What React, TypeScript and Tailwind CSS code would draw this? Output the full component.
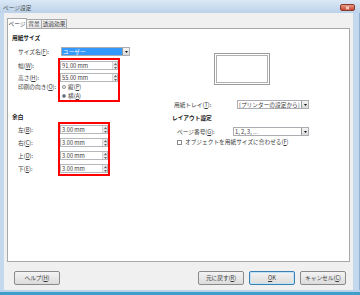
import React from "react";

const U = ({ c }: { c: string }) => <span className="underline decoration-[0.5px] underline-offset-[0.5px]">{c}</span>;

const Lbl = ({ pre, k, post = ")" }: { pre: string; k: string; post?: string }) => (
  <span className="whitespace-nowrap">
    {pre}(<U c={k} />{post}
  </span>
);

const Tri = ({ up = false }: { up?: boolean }) => (
  <svg width="3" height="2" viewBox="0 0 3 2" className="block">
    <polygon points={up ? "0,2 3,2 1.5,0" : "0,0 3,0 1.5,2"} fill="#666" />
  </svg>
);

const Spin = ({ v }: { v: string }) => (
  <div className="flex h-[9px] w-full border border-[#b5b7bd] bg-white">
    <span className="flex flex-1 items-center pl-[1px] leading-none text-[#3a3a3a]">{v}</span>
    <div className="flex w-[5px] flex-col border-l border-[#d6d6d6] bg-[#eeeeee]">
      <div className="flex flex-1 items-center justify-center border-b border-[#d6d6d6]">
        <Tri up />
      </div>
      <div className="flex flex-1 items-center justify-center">
        <Tri />
      </div>
    </div>
  </div>
);

const Drop = ({ t, sel = false, w }: { t: string; sel?: boolean; w: string }) => (
  <div className={`flex h-[9px] ${w} border border-[#abadb3] ${sel ? "bg-[#3399ff]" : "bg-white"}`}>
    <span className={`flex flex-1 items-center pl-[1px] leading-none whitespace-nowrap ${sel ? "text-white" : "text-[#3a3a3a]"}`}>{t}</span>
    <div className="flex w-[7px] items-center justify-center border-l border-[#9a9a9a] bg-gradient-to-b from-[#f4f4f4] to-[#d9d9d9]">
      <svg width="3" height="2" viewBox="0 0 3 2" className="block">
        <polygon points="0,0 3,0 1.5,2" fill="#111" />
      </svg>
    </div>
  </div>
);

const Radio = ({ on = false }: { on?: boolean }) => (
  <div className="flex h-[4px] w-[4px] items-center justify-center rounded-full border-[0.5px] border-[#8a8a8a] bg-white">
    {on && <div className="h-[2px] w-[2px] rounded-full bg-[#2a4a80]" />}
  </div>
);

const Btn = ({ children, focus = false }: { children: React.ReactNode; focus?: boolean }) => (
  <div
    className={`flex h-[14px] w-[46px] items-center justify-center rounded-[2px] border bg-gradient-to-b from-[#f3f3f3] to-[#dcdcdc] text-[#3a3a3a] ${
      focus ? "border-[#3c7fb1] shadow-[inset_0_0_0_1px_#bfe3f7]" : "border-[#8a8a8a]"
    }`}
  >
    {children}
  </div>
);

export default function App() {
  return (
    <div className="flex h-[295px] w-[360px] flex-col overflow-hidden bg-[#c4d8ee] font-['Noto_Sans_CJK_JP',sans-serif] text-[5.7px] leading-none text-[#3a3a3a]">
      {/* title bar */}
      <div className="flex h-[13px] items-start justify-between bg-gradient-to-b from-[#dbe8f5] to-[#bcd2ea] pl-[3px] pr-[5px]">
        <span className="mt-[5px] text-[#444]">ページ設定</span>
        <div className="mt-[4px] flex h-[7px] w-[15px] items-center justify-center rounded-[2px] border-[0.5px] border-[#8a3a2a] bg-gradient-to-b from-[#e89a86] to-[#c4442c]">
          <svg width="5" height="4" viewBox="0 0 5 4">
            <path d="M0.8 0.5 L4.2 3.5 M4.2 0.5 L0.8 3.5" stroke="#fff" strokeWidth="1" />
          </svg>
        </div>
      </div>

      <div className="flex h-[277px]">
        <div className="w-[4px] bg-[#c4d8ee]" />
        {/* body */}
        <div className="flex w-[349px] flex-col bg-[#f0f0f0] px-[3px] pt-[5px]">
          {/* tabs */}
          <div className="relative z-10 -mb-[1px] flex h-[11px] items-start">
            <div className="flex h-[11px] w-[20px] items-center justify-center border-x border-t border-[#a8a8a8] bg-white">ページ</div>
            <div className="mt-[1px] flex h-[9px] w-[15px] items-center justify-center border-r border-t border-[#a8a8a8] bg-gradient-to-b from-[#f6f6f6] to-[#e6e6e6]">背景</div>
            <div className="mt-[1px] flex h-[9px] w-[25px] items-center justify-center border-r border-t border-[#a8a8a8] bg-gradient-to-b from-[#f6f6f6] to-[#e6e6e6]">透過効果</div>
          </div>
          {/* panel */}
          <div className="flex h-[234px] border border-[#a8a8a8] bg-white">
            {/* left column */}
            <div className="flex w-[163px] flex-col pl-[4px]">
              <div className="mt-[5px] flex h-[8px] items-center font-bold text-[#222]">用紙サイズ</div>
              <div className="mt-[5px] flex h-[9px] items-center pl-[6px]">
                <div className="w-[43px]">
                  <Lbl pre="サイズ名" k="F" post="):" />
                </div>
                <Drop t="ユーザー" sel w="w-[69px]" />
              </div>
              <div className="mt-[2px] flex pl-[6px]">
                <div className="flex w-[40px] flex-col pt-[3px]">
                  <div className="flex h-[9px] items-center"><Lbl pre="幅" k="W" post="):" /></div>
                  <div className="mt-[3px] flex h-[9px] items-center"><Lbl pre="高さ" k="H" post="):" /></div>
                  <div className="flex h-[9px] items-center"><Lbl pre="印刷の向き" k="O" post="):" /></div>
                </div>
                <div className="flex w-[62px] flex-col border-2 border-[#ff0000] px-0 pt-[1px]">
                  <Spin v="91.00 mm" />
                  <div className="mt-[3px]"><Spin v="55.00 mm" /></div>
                  <div className="flex h-[9px] items-center gap-[2px] pl-[2px]">
                    <Radio />
                    <Lbl pre="縦" k="P" />
                  </div>
                  <div className="flex h-[9px] items-center gap-[2px] pl-[2px]">
                    <Radio on />
                    <Lbl pre="横" k="A" />
                  </div>
                </div>
              </div>
              <div className="mt-[11px] flex h-[8px] items-center font-bold text-[#222]">余白</div>
              <div className="mt-[1px] flex pl-[6px]">
                <div className="flex w-[40px] flex-col gap-[4px] pt-[3px]">
                  <div className="flex h-[9px] items-center"><Lbl pre="左" k="B" post="):" /></div>
                  <div className="flex h-[9px] items-center"><Lbl pre="右" k="C" post="):" /></div>
                  <div className="flex h-[9px] items-center"><Lbl pre="上" k="D" post="):" /></div>
                  <div className="flex h-[9px] items-center"><Lbl pre="下" k="E" post="):" /></div>
                </div>
                <div className="flex w-[52px] flex-col gap-[4px] border-2 border-[#ff0000] py-[1px]">
                  <Spin v="3.00 mm" />
                  <Spin v="3.00 mm" />
                  <Spin v="3.00 mm" />
                  <Spin v="3.00 mm" />
                </div>
              </div>
            </div>

            {/* right column */}
            <div className="flex flex-1 flex-col">
              <div className="ml-[43px] mt-[24px] h-[32px] w-[56px] border border-[#9c9c9c] p-[1px]">
                <div className="h-full w-full border border-[#b0b0b0] bg-white" />
              </div>
              <div className="mt-[15px] flex h-[9px] items-center pl-[3px]">
                <div className="w-[63px]"><Lbl pre="用紙トレイ" k="T" post="):" /></div>
                <Drop t="[プリンターの設定から]" w="w-[72px]" />
              </div>
              <div className="mt-[5px] flex h-[8px] items-center pl-[1px] font-bold text-[#222]">レイアウト設定</div>
              <div className="mt-[5px] flex h-[9px] items-center pl-[6px]">
                <div className="w-[56px]"><Lbl pre="ページ番号" k="G" post="):" /></div>
                <Drop t="1, 2, 3, ..." w="w-[76px]" />
              </div>
              <div className="mt-[2px] flex h-[8px] items-center gap-[3px] pl-[6px]">
                <div className="h-[5px] w-[5px] border-[0.5px] border-[#8a8a8a] bg-white" />
                <Lbl pre="オブジェクトを用紙サイズに合わせる" k="F" />
              </div>
            </div>
          </div>

          {/* buttons */}
          <div className="mt-[9px] flex items-center pl-[7px] pr-[4px]">
            <Btn>
              <Lbl pre="ヘルプ" k="H" />
            </Btn>
            <div className="flex-1" />
            <div className="flex gap-[5px]">
              <Btn>
                <Lbl pre="元に戻す" k="R" />
              </Btn>
              <Btn focus>
                <span><U c="O" />K</span>
              </Btn>
              <Btn>
                <Lbl pre="キャンセル" k="C" />
              </Btn>
            </div>
          </div>
        </div>
        <div className="w-[7px] border-r border-[#8fb2d6] bg-[#c4d8ee]" />
      </div>
      <div className="h-[2px] bg-[#b9d1ea]" />
      <div className="h-[3px] bg-[#3f9fc9]" />
    </div>
  );
}
